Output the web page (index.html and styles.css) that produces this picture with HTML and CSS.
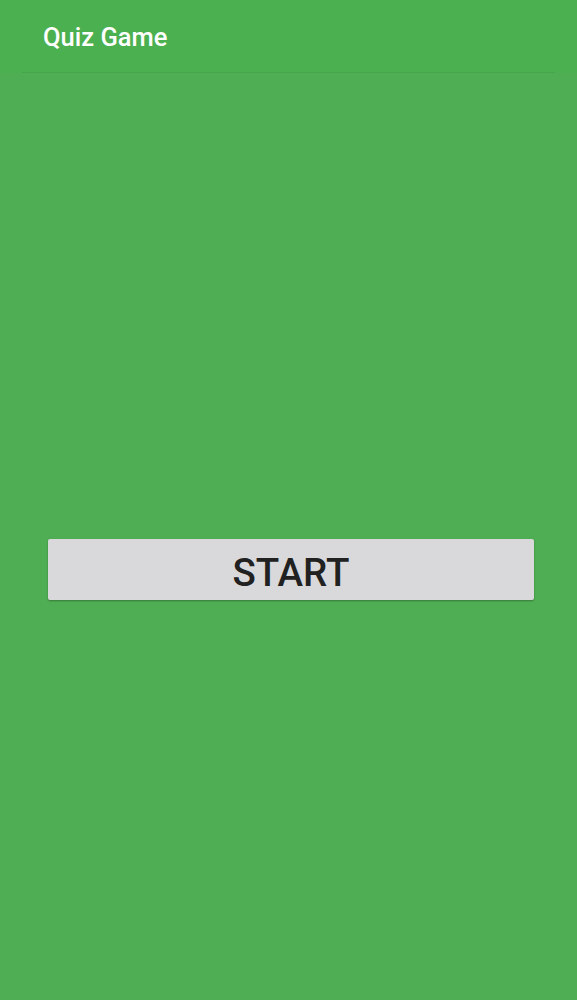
FILE: index.html
```html
<!DOCTYPE html>
<html>
<head>
<meta charset="utf-8">
<link rel="stylesheet" href="styles.css">
</head>
<body>
<div class="app">
  <header class="bar"><div class="bar-inner"><h1 class="title">Quiz Game</h1></div></header>
  <main class="content">
    <button class="start">START</button>
  </main>
</div>
</body>
</html>
```
FILE: styles.css
```css
html, body { margin: 0; padding: 0; }
body { background: #4fae53; font-family: Roboto, "Noto Sans", sans-serif; }
.app { width: 577px; height: 1000px; display: flex; flex-direction: column; }
.bar { background: #4bb050; padding: 0 22px; }
.bar-inner { height: 73px; border-bottom: 1px solid rgba(0,0,0,0.06); box-sizing: border-box; padding: 22px 0 0 21px; }
.title { margin: 0; color: #fff; font-size: 25.5px; font-weight: 500; line-height: 31px; }
.content { flex: 1; display: flex; flex-direction: column; padding: 466px 43px 0 48px; }
.start { width: 486px; height: 61px; background: #d9d9db; border: 0; border-radius: 2px; box-shadow: 0 1px 2px rgba(0,0,0,0.3); color: #212121; font-family: Roboto, sans-serif; font-size: 38.5px; font-weight: 500; padding: 5px 0 0 0; }
```
